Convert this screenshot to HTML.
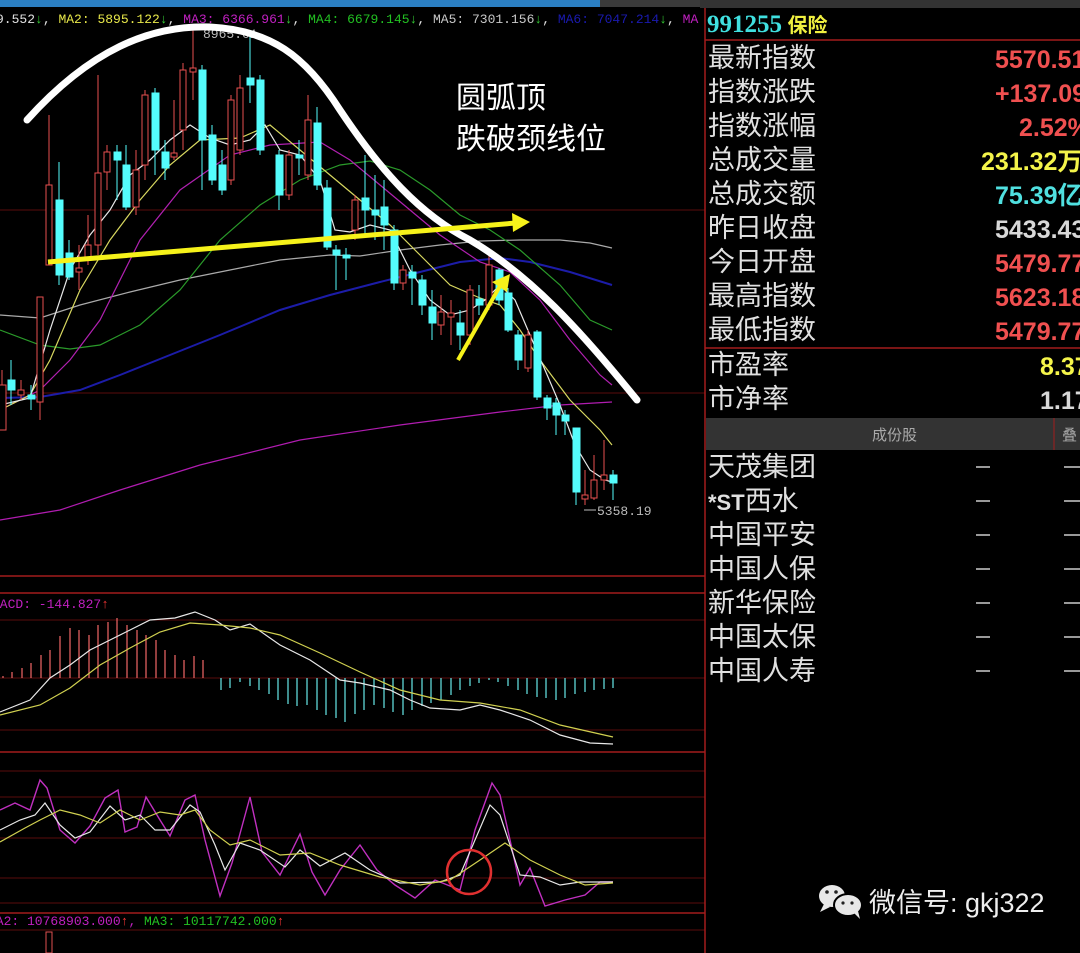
<!DOCTYPE html>
<html><head><meta charset="utf-8"><style>
html,body{margin:0;padding:0;background:#000;}
body{width:1080px;height:953px;overflow:hidden;position:relative;}
svg{position:absolute;left:0;top:0;}
</style></head><body>
<svg width="1080" height="953" viewBox="0 0 1080 953" xmlns="http://www.w3.org/2000/svg">
<rect width="1080" height="953" fill="#000"/>
<rect x="0" y="0" width="600" height="7" fill="#2b7fc3"/>
<rect x="600" y="0" width="480" height="7" fill="#3a3a3a"/>
<rect x="700" y="0" width="380" height="8" fill="#333"/>
<g stroke="#5a0d0d" stroke-width="1">
<line x1="0" y1="210" x2="705" y2="210"/>
<line x1="0" y1="393" x2="705" y2="393"/>
<line x1="0" y1="620" x2="705" y2="620"/>
<line x1="0" y1="678" x2="705" y2="678"/>
<line x1="0" y1="730" x2="705" y2="730"/>
<line x1="0" y1="771" x2="705" y2="771"/>
<line x1="0" y1="797" x2="705" y2="797"/>
<line x1="0" y1="838" x2="705" y2="838"/>
<line x1="0" y1="878" x2="705" y2="878"/>
<line x1="0" y1="903" x2="705" y2="903"/>
<line x1="0" y1="930" x2="705" y2="930"/>
</g>
<g stroke="#a31c1c" stroke-width="1.5">
<line x1="0" y1="576" x2="705" y2="576"/>
<line x1="0" y1="593" x2="705" y2="593"/>
<line x1="0" y1="752" x2="705" y2="752"/>
<line x1="0" y1="913" x2="705" y2="913"/>
<line x1="705" y1="8" x2="705" y2="953"/>
<line x1="705" y1="40" x2="1080" y2="40"/>
<line x1="705" y1="348" x2="1080" y2="348"/>
</g>
<g font-family="Liberation Mono, monospace" font-size="13">
<text x="-4" y="23" fill="#e0e0e0">9.552<tspan fill="#3c3">↓</tspan>, <tspan fill="#e8e84a">MA2: 5895.122</tspan><tspan fill="#3c3">↓</tspan>, <tspan fill="#c020c0">MA3: 6366.961</tspan><tspan fill="#3c3">↓</tspan>, <tspan fill="#22c022">MA4: 6679.145</tspan><tspan fill="#3c3">↓</tspan>, <tspan fill="#c8c8c8">MA5: 7301.156</tspan><tspan fill="#3c3">↓</tspan>, <tspan fill="#1a1ab0">MA6: 7047.214</tspan><tspan fill="#3c3">↓</tspan>, <tspan fill="#c020c0">MA</tspan></text>
<text x="203" y="38" fill="#bbb">8965.01</text>
<text x="597" y="515" fill="#bbb">5358.19</text>
<text x="-8" y="608" fill="#c020c0">MACD: -144.827<tspan fill="#e33">↑</tspan></text>
<text x="-12" y="925" fill="#c020c0">MA2: 10768903.000<tspan fill="#e33">↑</tspan>, <tspan fill="#22c022">MA3: 10117742.000</tspan><tspan fill="#e33">↑</tspan></text>
</g>
<line x1="584" y1="510" x2="596" y2="510" stroke="#bbb"/>
<rect x="46" y="932" width="6" height="21" fill="none" stroke="#e05050"/>
<g fill="none" stroke-width="1.2">
<polyline stroke="#b01cb0" points="0,520 60,510 120,490 200,465 300,440 400,425 500,412 560,405 612,402"/>
<polyline stroke="#1c1ca8" stroke-width="2" points="0,398 40,397 80,390 120,375 170,355 220,335 280,310 330,295 380,282 420,272 460,262 500,258 530,262 570,272 612,285"/>
<polyline stroke="#aaaaaa" points="0,315 40,318 80,305 130,292 180,280 230,270 280,260 330,255 360,256 400,250 440,245 480,241 520,240 560,240 590,243 612,248"/>
<polyline stroke="#2a9a2a" points="0,330 40,345 70,349 100,345 140,325 180,290 220,240 260,205 300,180 340,165 370,161 400,170 430,190 460,215 490,230 520,250 560,285 590,320 612,330"/>
<polyline stroke="#b020b0" points="0,410 40,390 70,360 100,320 140,240 180,190 230,155 270,145 320,142 350,160 380,185 410,210 440,235 480,262 510,272 540,300 570,340 600,375 612,385"/>
<polyline stroke="#d8d860" points="0,410 30,395 50,360 80,290 110,240 140,200 170,165 200,140 240,138 270,125 300,150 330,175 360,200 390,225 420,255 450,285 480,298 500,305 520,330 540,360 570,400 600,430 612,445"/>
<polyline stroke="#e8e8e8" points="0,405 30,398 50,330 70,270 90,235 110,210 130,175 150,160 170,140 190,125 210,138 230,145 250,140 265,125 280,150 300,155 320,180 335,230 350,232 370,225 390,230 410,270 430,300 450,315 470,310 485,300 500,285 515,300 530,335 545,370 560,405 575,445 590,470 605,480 612,482"/>
</g>
<g stroke-width="1">
<g stroke="#54fcfc" fill="#54fcfc">
<line x1="11" y1="360" x2="11" y2="405"/><rect x="8" y="380" width="7" height="10"/>
<line x1="31" y1="385" x2="31" y2="410"/><rect x="28" y="395" width="7" height="4"/>
<line x1="59" y1="162" x2="59" y2="285"/><rect x="56" y="200" width="7" height="75"/>
<line x1="69" y1="240" x2="69" y2="280"/><rect x="66" y="253" width="7" height="24"/>
<line x1="117" y1="145" x2="117" y2="200"/><rect x="114" y="152" width="7" height="8"/>
<line x1="126" y1="145" x2="126" y2="210"/><rect x="123" y="165" width="7" height="42"/>
<line x1="155" y1="88" x2="155" y2="175"/><rect x="152" y="93" width="7" height="57"/>
<line x1="165" y1="140" x2="165" y2="180"/><rect x="162" y="152" width="7" height="16"/>
<line x1="202" y1="65" x2="202" y2="190"/><rect x="199" y="70" width="7" height="70"/>
<line x1="212" y1="125" x2="212" y2="185"/><rect x="209" y="135" width="7" height="45"/>
<line x1="222" y1="150" x2="222" y2="195"/><rect x="219" y="165" width="7" height="25"/>
<line x1="250" y1="30" x2="250" y2="103"/><rect x="247" y="78" width="7" height="7"/>
<line x1="260" y1="75" x2="260" y2="155"/><rect x="257" y="80" width="7" height="70"/>
<line x1="279" y1="150" x2="279" y2="210"/><rect x="276" y="155" width="7" height="40"/>
<line x1="299" y1="140" x2="299" y2="175"/><rect x="296" y="155" width="7" height="3"/>
<line x1="317" y1="107" x2="317" y2="190"/><rect x="314" y="123" width="7" height="62"/>
<line x1="327" y1="180" x2="327" y2="250"/><rect x="324" y="188" width="7" height="59"/>
<line x1="336" y1="245" x2="336" y2="290"/><rect x="333" y="250" width="7" height="5"/>
<line x1="346" y1="248" x2="346" y2="280"/><rect x="343" y="255" width="7" height="3"/>
<line x1="365" y1="155" x2="365" y2="235"/><rect x="362" y="198" width="7" height="12"/>
<line x1="375" y1="175" x2="375" y2="240"/><rect x="372" y="210" width="7" height="5"/>
<line x1="384" y1="180" x2="384" y2="250"/><rect x="381" y="207" width="7" height="18"/>
<line x1="394" y1="225" x2="394" y2="290"/><rect x="391" y="230" width="7" height="53"/>
<line x1="412" y1="265" x2="412" y2="305"/><rect x="409" y="272" width="7" height="6"/>
<line x1="422" y1="275" x2="422" y2="315"/><rect x="419" y="280" width="7" height="25"/>
<line x1="432" y1="290" x2="432" y2="340"/><rect x="429" y="307" width="7" height="16"/>
<line x1="460" y1="310" x2="460" y2="350"/><rect x="457" y="323" width="7" height="12"/>
<line x1="479" y1="285" x2="479" y2="315"/><rect x="476" y="299" width="7" height="6"/>
<line x1="499" y1="268" x2="499" y2="305"/><rect x="496" y="270" width="7" height="30"/>
<line x1="508" y1="288" x2="508" y2="332"/><rect x="505" y="293" width="7" height="37"/>
<line x1="518" y1="330" x2="518" y2="370"/><rect x="515" y="335" width="7" height="25"/>
<line x1="537" y1="330" x2="537" y2="400"/><rect x="534" y="332" width="7" height="65"/>
<line x1="547" y1="395" x2="547" y2="420"/><rect x="544" y="398" width="7" height="10"/>
<line x1="556" y1="398" x2="556" y2="435"/><rect x="553" y="403" width="7" height="12"/>
<line x1="565" y1="410" x2="565" y2="435"/><rect x="562" y="415" width="7" height="6"/>
<line x1="576" y1="428" x2="576" y2="505"/><rect x="573" y="428" width="7" height="64"/>
<line x1="613" y1="470" x2="613" y2="500"/><rect x="610" y="475" width="7" height="8"/>
</g>
<g stroke="#e85050" fill="#000">
<line x1="2" y1="370" x2="2" y2="430"/><rect x="-1" y="385" width="7" height="45"/>
<line x1="21" y1="380" x2="21" y2="400"/><rect x="18" y="390" width="6" height="5"/>
<line x1="40" y1="297" x2="40" y2="420"/><rect x="37" y="297" width="6" height="105"/>
<line x1="49" y1="115" x2="49" y2="265"/><rect x="46" y="185" width="6" height="80"/>
<line x1="79" y1="245" x2="79" y2="290"/><rect x="76" y="268" width="6" height="4"/>
<line x1="88" y1="215" x2="88" y2="265"/><rect x="85" y="245" width="6" height="13"/>
<line x1="98" y1="75" x2="98" y2="255"/><rect x="95" y="173" width="6" height="72"/>
<line x1="107" y1="145" x2="107" y2="190"/><rect x="104" y="152" width="6" height="20"/>
<line x1="136" y1="150" x2="136" y2="215"/><rect x="133" y="170" width="6" height="37"/>
<line x1="145" y1="90" x2="145" y2="180"/><rect x="142" y="95" width="6" height="70"/>
<line x1="174" y1="100" x2="174" y2="160"/><rect x="171" y="153" width="6" height="4"/>
<line x1="183" y1="63" x2="183" y2="150"/><rect x="180" y="70" width="6" height="60"/>
<line x1="193" y1="28" x2="193" y2="100"/><rect x="190" y="68" width="6" height="4"/>
<line x1="231" y1="95" x2="231" y2="185"/><rect x="228" y="100" width="6" height="80"/>
<line x1="240" y1="75" x2="240" y2="155"/><rect x="237" y="88" width="6" height="62"/>
<line x1="289" y1="150" x2="289" y2="200"/><rect x="286" y="155" width="6" height="40"/>
<line x1="308" y1="95" x2="308" y2="180"/><rect x="305" y="120" width="6" height="55"/>
<line x1="355" y1="195" x2="355" y2="240"/><rect x="352" y="200" width="6" height="30"/>
<line x1="403" y1="265" x2="403" y2="290"/><rect x="400" y="270" width="6" height="13"/>
<line x1="441" y1="295" x2="441" y2="335"/><rect x="438" y="312" width="6" height="13"/>
<line x1="451" y1="300" x2="451" y2="345"/><rect x="448" y="313" width="6" height="4"/>
<line x1="470" y1="285" x2="470" y2="345"/><rect x="467" y="290" width="6" height="45"/>
<line x1="489" y1="255" x2="489" y2="310"/><rect x="486" y="265" width="6" height="40"/>
<line x1="528" y1="330" x2="528" y2="372"/><rect x="525" y="335" width="6" height="33"/>
<line x1="585" y1="470" x2="585" y2="505"/><rect x="582" y="495" width="6" height="4"/>
<line x1="594" y1="455" x2="594" y2="500"/><rect x="591" y="480" width="6" height="18"/>
<line x1="604" y1="440" x2="604" y2="490"/><rect x="601" y="475" width="6" height="5"/>
</g>
</g>
<path d="M27,120 C90,50 150,25 210,27 C270,30 305,55 340,110 C380,170 420,215 470,240 C530,275 580,330 637,400" fill="none" stroke="#fff" stroke-width="7" stroke-linecap="round"/>
<line x1="48" y1="262" x2="516" y2="223" stroke="#f6f21a" stroke-width="5"/>
<polygon points="512,213 530,222 513,232" fill="#f6f21a"/>
<line x1="458" y1="360" x2="500" y2="286" stroke="#f6f21a" stroke-width="4"/>
<polygon points="492,282 510,274 507,292" fill="#f6f21a"/>
<g font-family="Liberation Sans, Noto Sans CJK SC, sans-serif" font-size="30" fill="#fff">
<text x="456" y="108">圆弧顶</text>
<text x="456" y="149">跌破颈线位</text>
</g>
<path d="M3,676V678M12,672V678M22,668V678M31,663V678M41,655V678M50,650V678M60,636V678M70,628V678M79,630V678M89,635V678M98,625V678M108,622V678M117,618V678M127,625V678M137,630V678M146,635V678M156,640V678M165,650V678M175,655V678M184,660V678M194,656V678M203,660V678" stroke="#e06060" stroke-width="1.3"/>
<path d="M221,678V690M230,678V688M240,678V682M250,678V686M259,678V690M269,678V694M278,678V700M288,678V704M297,678V706M307,678V705M317,678V710M326,678V715M336,678V718M345,678V722M355,678V714M364,678V710M374,678V705M384,678V708M393,678V712M403,678V715M412,678V710M422,678V706M431,678V703M441,678V700M451,678V695M460,678V690M470,678V686M479,678V683M489,678V680M498,678V682M508,678V686M518,678V690M527,678V694M537,678V697M546,678V698M556,678V700M565,678V698M575,678V694M585,678V692M594,678V690M604,678V689M613,678V688" stroke="#60d8d8" stroke-width="1.3"/>
<polyline fill="none" stroke="#e8e8e8" stroke-width="1.2" points="0,712 30,700 50,678 70,665 90,650 110,640 130,630 150,620 175,618 195,612 215,620 230,630 250,624 280,645 310,660 340,680 360,683 390,690 410,700 430,708 460,710 480,705 500,710 530,720 560,735 590,743 613,744"/>
<polyline fill="none" stroke="#d0d050" stroke-width="1.2" points="0,715 40,705 70,688 100,665 130,648 160,632 190,623 220,625 250,628 280,635 320,653 360,672 400,690 440,700 480,703 520,710 560,725 613,737"/>
<polyline fill="none" stroke="#c030c0" stroke-width="1.4" points="0,810 15,803 30,810 40,780 47,788 60,830 75,843 90,826 105,798 118,790 125,832 137,827 146,797 160,820 170,836 185,800 195,795 205,840 220,896 232,863 250,797 262,852 280,875 300,834 312,872 325,895 340,870 360,845 377,870 395,885 415,898 435,880 460,890 475,830 492,783 500,795 520,885 530,868 545,906 565,900 585,895 600,882 613,882"/>
<polyline fill="none" stroke="#e8e8e8" stroke-width="1.2" points="0,830 20,820 35,815 45,803 60,825 75,838 90,832 110,806 125,820 140,815 155,830 170,830 190,805 200,812 215,845 225,870 240,843 260,850 285,867 300,850 320,866 345,853 370,870 400,883 440,882 460,875 490,805 500,815 520,875 540,877 560,885 580,882 613,882"/>
<polyline fill="none" stroke="#d0d050" stroke-width="1.2" points="0,842 25,828 40,820 60,810 80,815 100,823 120,810 140,820 160,812 180,815 195,810 210,830 230,845 250,840 280,855 310,853 340,865 380,877 420,885 450,880 480,860 505,843 530,860 560,875 585,885 613,883"/>
<circle cx="469" cy="872" r="22" fill="none" stroke="#e03030" stroke-width="2.5"/>
<text x="707" y="32" font-family="Liberation Serif, serif" font-weight="bold" font-size="25" fill="#40e0e0">991255<tspan fill="#f0f040" font-family="Liberation Sans, Noto Sans CJK SC, sans-serif" font-size="20"> 保险</tspan></text>
<g font-family="Liberation Sans, Noto Sans CJK SC, sans-serif" font-size="27" fill="#e0e0e0">
<text x="708" y="67">最新指数</text>
<text x="708" y="101">指数涨跌</text>
<text x="708" y="135">指数涨幅</text>
<text x="708" y="169">总成交量</text>
<text x="708" y="203">总成交额</text>
<text x="708" y="237">昨日收盘</text>
<text x="708" y="271">今日开盘</text>
<text x="708" y="305">最高指数</text>
<text x="708" y="339">最低指数</text>
<text x="708" y="374">市盈率</text>
<text x="708" y="408">市净率</text>
<text x="708" y="476">天茂集团</text>
<text x="708" y="510"><tspan font-weight="bold" font-size="22">*ST</tspan>西水</text>
<text x="708" y="544">中国平安</text>
<text x="708" y="578">中国人保</text>
<text x="708" y="612">新华保险</text>
<text x="708" y="646">中国太保</text>
<text x="708" y="680">中国人寿</text>
</g>
<g font-family="Liberation Sans, Noto Sans CJK SC, sans-serif" font-weight="bold" font-size="25">
<text x="995" y="68" fill="#f05050">5570.51</text>
<text x="995" y="102" fill="#f05050">+137.09</text>
<text x="1019" y="136" fill="#f05050">2.52%</text>
<text x="981" y="170" fill="#f4f44a">231.32万</text>
<text x="995" y="204" fill="#50e0e0">75.39亿</text>
<text x="995" y="238" fill="#d8d8d8">5433.43</text>
<text x="995" y="272" fill="#f05050">5479.77</text>
<text x="995" y="306" fill="#f05050">5623.18</text>
<text x="995" y="340" fill="#f05050">5479.77</text>
<text x="1040" y="375" fill="#f4f44a">8.37</text>
<text x="1040" y="409" fill="#d8d8d8">1.17</text>
</g>
<rect x="706" y="418" width="374" height="32" fill="#333"/>
<line x1="1054" y1="418" x2="1054" y2="450" stroke="#a31c1c"/>
<text x="872" y="440" font-family="Liberation Sans, Noto Sans CJK SC, sans-serif" font-size="15" fill="#aaa">成份股</text>
<text x="1062" y="440" font-family="Liberation Sans, Noto Sans CJK SC, sans-serif" font-size="15" fill="#aaa">叠</text>
<g stroke="#ccc" stroke-width="1.5">
<path d="M976,467h14M1064,467h16M976,501h14M1064,501h16M976,535h14M1064,535h16M976,569h14M1064,569h16M976,603h14M1064,603h16M976,637h14M1064,637h16M976,671h14M1064,671h16"/>
</g>
<g fill="#e8e8e8">
<ellipse cx="832" cy="896" rx="13" ry="11"/>
<path d="M824,904 l-4,8 l10,-5z"/>
<ellipse cx="848" cy="905" rx="14" ry="11" stroke="#000" stroke-width="2"/>
<path d="M854,913 l6,6 l-2,-8z"/>
</g>
<g fill="#222"><circle cx="827" cy="892" r="1.8"/><circle cx="836" cy="892" r="1.8"/><circle cx="843" cy="903" r="1.6"/><circle cx="852" cy="903" r="1.6"/></g>
<text x="869" y="912" font-family="Liberation Sans, Noto Sans CJK SC, sans-serif" font-size="27" fill="#eee">微信号: gkj322</text>
</svg>
</body></html>
